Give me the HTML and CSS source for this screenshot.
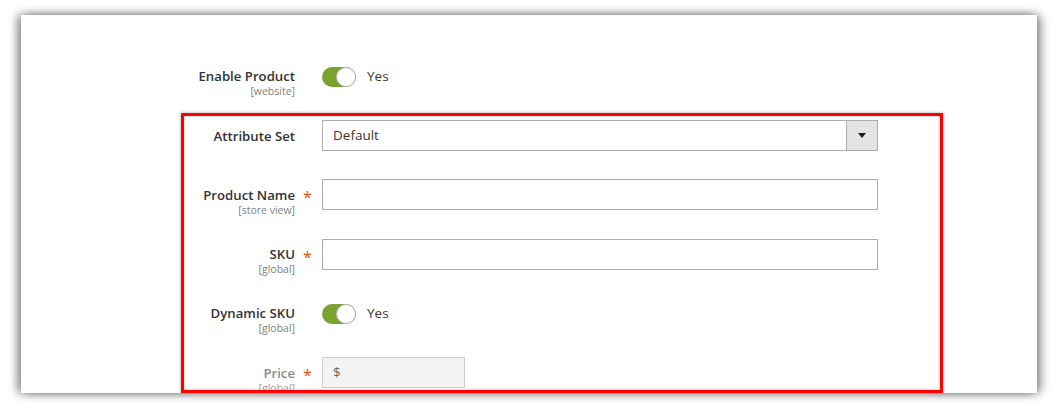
FILE: index.html
```html
<!DOCTYPE html>
<html>
<head>
<meta charset="utf-8">
<link rel="stylesheet" href="styles.css">
</head>
<body>
<div class="panel">
  <div class="row row-first">
    <div class="label"><span class="main">Enable Product</span><span class="scope">[website]</span></div>
    <div class="req"></div>
    <div class="control">
      <span class="toggle"><span class="knob"></span></span><span class="toggle-text">Yes</span>
    </div>
  </div>
  <div class="highlight">
    <div class="row">
      <div class="label"><span class="main">Attribute Set</span></div>
      <div class="req"></div>
      <div class="control">
        <div class="select"><span class="select-value">Default</span><span class="select-btn"><span class="caret"></span></span></div>
      </div>
    </div>
    <div class="row">
      <div class="label"><span class="main">Product Name</span><span class="scope">[store view]</span></div>
      <div class="req">*</div>
      <div class="control"><div class="input"></div></div>
    </div>
    <div class="row">
      <div class="label"><span class="main">SKU</span><span class="scope">[global]</span></div>
      <div class="req">*</div>
      <div class="control"><div class="input"></div></div>
    </div>
    <div class="row">
      <div class="label"><span class="main">Dynamic SKU</span><span class="scope">[global]</span></div>
      <div class="req"></div>
      <div class="control">
        <span class="toggle"><span class="knob"></span></span><span class="toggle-text">Yes</span>
      </div>
    </div>
    <div class="row disabled">
      <div class="label"><span class="main">Price</span><span class="scope">[global]</span></div>
      <div class="req">*</div>
      <div class="control"><div class="input price">$</div></div>
    </div>
  </div>
</div>
</body>
</html>
```

FILE: styles.css
```css
html, body {
  margin: 0;
  padding: 0;
  background: #ffffff;
}
body {
  width: 1058px;
  height: 408px;
  overflow: hidden;
  font-family: "Open Sans", "DejaVu Sans", sans-serif;
  color: #303030;
}
.panel {
  box-sizing: border-box;
  margin: 15px 0 0 21px;
  width: 1016px;
  height: 378px;
  background: #ffffff;
  padding: 45.5px 0 0 160px;
  overflow: hidden;
  box-shadow: 0 0 10px 1px rgba(0,0,0,0.2), -5px 0 9px -1px rgba(0,0,0,0.35), 5px 0 9px -1px rgba(0,0,0,0.35);
}
.row {
  display: flex;
  height: 31px;
  margin-bottom: 28.25px;
}
.row-first {
  padding-left: 3px;
  margin-bottom: 21.5px;
}
.label {
  width: 111px;
  text-align: right;
  display: flex;
  flex-direction: column;
  align-items: flex-end;
}
.main {
  display: block;
  font-size: 13.2px;
  font-weight: 600;
  line-height: 18px;
  padding-top: 6.5px;
  white-space: nowrap;
  color: #333333;
}
.scope {
  display: block;
  font-size: 10.5px;
  line-height: 12px;
  color: #808080;
  white-space: nowrap;
}
.req {
  width: 27px;
  box-sizing: border-box;
  padding-left: 8px;
  color: #eb5202;
  font-size: 16px;
  line-height: 36px;
}
.control {
  display: flex;
  align-items: center;
}
.highlight {
  box-sizing: border-box;
  width: 762px;
  height: 280px;
  border: 3px solid #ff0000;
  padding-top: 4px;
  overflow: hidden;
  box-shadow: 0 0 3px rgba(0,0,0,0.35), inset 0 0 3px rgba(0,0,0,0.3);
}
.toggle {
  position: relative;
  display: inline-block;
  width: 34px;
  height: 20px;
  border-radius: 10px;
  background: #79a22e;
  margin-top: 2px;
}
.knob {
  position: absolute;
  right: 0;
  top: 0;
  box-sizing: border-box;
  width: 20px;
  height: 20px;
  border-radius: 50%;
  background: #ffffff;
  border: 1px solid #b5b5b5;
}
.toggle-text {
  margin-left: 11px;
  font-size: 13.5px;
  color: #41362f;
  line-height: 20px;
}
.select {
  box-sizing: border-box;
  width: 556px;
  height: 31px;
  border: 1px solid #adadad;
  display: flex;
  align-items: stretch;
  background: #ffffff;
}
.select-value {
  flex: 1;
  padding-left: 10px;
  font-size: 13.5px;
  line-height: 29px;
  color: #41362f;
}
.select-btn {
  width: 30px;
  background: #e3e3e3;
  border-left: 1px solid #adadad;
  display: flex;
  align-items: center;
  justify-content: center;
}
.caret {
  width: 0;
  height: 0;
  border-left: 4px solid transparent;
  border-right: 4px solid transparent;
  border-top: 5px solid #1a1a1a;
}
.input {
  box-sizing: border-box;
  width: 556px;
  height: 31px;
  border: 1px solid #adadad;
  background: #ffffff;
}
.input.price {
  width: 143px;
  background: #f4f4f4;
  border-color: #cccccc;
  padding-left: 10px;
  font-size: 13.5px;
  line-height: 29px;
  color: #666666;
}
.disabled .main {
  color: #8a8a8a;
}
.disabled .scope {
  color: #a0a0a0;
}
```
